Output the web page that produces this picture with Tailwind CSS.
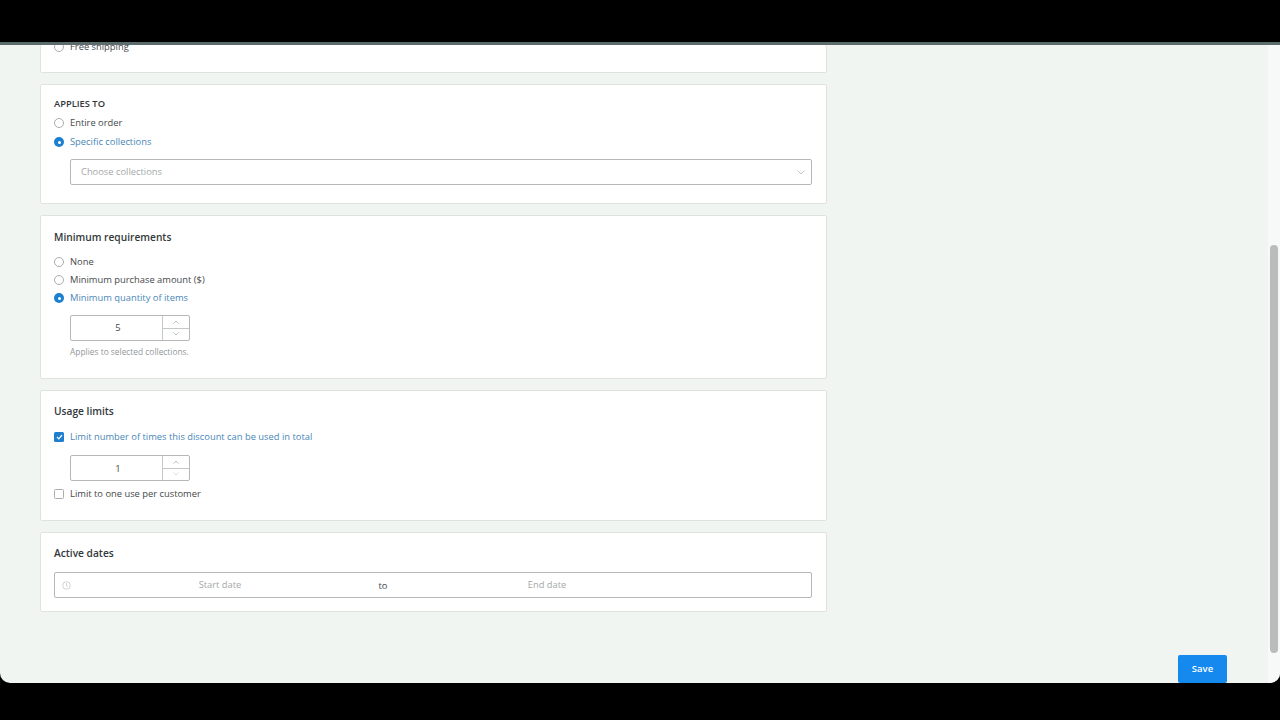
<!DOCTYPE html>
<html lang="en">
<head>
    <meta charset="UTF-8">
    <title>Discount</title>
    <script src="https://cdn.jsdelivr.net/npm/@tailwindcss/browser@4"></script>
</head>
<body class="bg-black font-['Open_Sans',sans-serif] text-[9.35px] leading-[14px] text-[#45494c]">
<div class="h-[720px] w-[1280px] overflow-hidden flex flex-col">
    <div class="h-[42px] bg-black shrink-0"></div>
    <div class="h-[3px] bg-[#5c6b6b] shrink-0"></div>

    <div class="h-[638px] flex rounded-b-[10px] overflow-hidden bg-[#f1f5f1] shrink-0">
        <!-- page -->
        <div class="flex-1 flex flex-col justify-between overflow-hidden pl-10">
            <div class="w-[787px] flex flex-col gap-[11px]">
                <!-- shipping, scrolled off -->
                <div class="bg-white border border-[#dfe3e0] rounded-[2px] border-t-0 h-[28px] px-[13px] overflow-hidden">
                    <div class="flex items-center gap-[6px] -mt-[5px]">
                        <span class="w-[10px] h-[10px] rounded-full border border-[#a9adad] bg-white shrink-0"></span>
                        <span>Free shipping</span>
                    </div>
                </div>

                <!-- applies to -->
                <div class="bg-white border border-[#dfe3e0] rounded-[2px] h-[120px] px-[13px] pt-[12px]">
                    <h3 class="text-[9.35px] font-semibold text-[#33373a] mb-[5px]">APPLIES TO</h3>
                    <div class="flex flex-col gap-[5px]">
                        <div class="flex items-center gap-[6px]">
                            <span class="w-[10px] h-[10px] rounded-full border border-[#a9adad] shrink-0"></span>
                            <span>Entire order</span>
                        </div>
                        <div class="flex items-center gap-[6px]">
                            <span class="w-[10px] h-[10px] rounded-full bg-[#1c7fd0] flex items-center justify-center shrink-0"><span class="w-[3px] h-[3px] rounded-full bg-white"></span></span>
                            <span class="text-[#4a87b8]">Specific collections</span>
                        </div>
                    </div>
                    <div class="ml-[16px] mr-[1px] mt-[10px] h-[26px] border border-[#b4b8b8] rounded-[2px] flex items-center justify-between pl-[10px] pr-[6px] text-[#a4a8a8]">
                        <span>Choose collections</span>
                        <svg width="8" height="5" viewBox="0 0 8 5" fill="none" stroke="#c4c8c8" stroke-width="1"><path d="M.5.5 4 4 7.5.5"/></svg>
                    </div>
                </div>

                <!-- minimum requirements -->
                <div class="bg-white border border-[#dfe3e0] rounded-[2px] h-[164px] px-[13px] pt-[14px]">
                    <h3 class="text-[10.2px] font-semibold text-[#33373a] mb-[11px]">Minimum requirements</h3>
                    <div class="flex flex-col gap-[4px]">
                        <div class="flex items-center gap-[6px]">
                            <span class="w-[10px] h-[10px] rounded-full border border-[#a9adad] shrink-0"></span>
                            <span>None</span>
                        </div>
                        <div class="flex items-center gap-[6px]">
                            <span class="w-[10px] h-[10px] rounded-full border border-[#a9adad] shrink-0"></span>
                            <span>Minimum purchase amount ($)</span>
                        </div>
                        <div class="flex items-center gap-[6px]">
                            <span class="w-[10px] h-[10px] rounded-full bg-[#1c7fd0] flex items-center justify-center shrink-0"><span class="w-[3px] h-[3px] rounded-full bg-white"></span></span>
                            <span class="text-[#4a87b8]">Minimum quantity of items</span>
                        </div>
                    </div>
                    <div class="ml-[16px] mt-[10px] w-[120px] h-[26px] border border-[#b4b8b8] rounded-[2px] flex">
                        <div class="flex-1 flex items-center justify-center pl-[3px]">5</div>
                        <div class="w-[27px] border-l border-[#c4c8c8] flex flex-col">
                            <div class="flex-1 flex items-center justify-center border-b border-[#c4c8c8]">
                                <svg width="6" height="4" viewBox="0 0 6 4" fill="none" stroke="#a9adad" stroke-width=".8"><path d="M.5 3.5 3 1l2.5 2.5"/></svg>
                            </div>
                            <div class="flex-1 flex items-center justify-center">
                                <svg width="6" height="4" viewBox="0 0 6 4" fill="none" stroke="#a9adad" stroke-width=".8"><path d="M.5.5 3 3 5.5.5"/></svg>
                            </div>
                        </div>
                    </div>
                    <p class="ml-[16px] mt-[4px] text-[8.4px] text-[#93979a]">Applies to selected collections.</p>
                </div>

                <!-- usage limits -->
                <div class="bg-white border border-[#dfe3e0] rounded-[2px] h-[131px] px-[13px] pt-[13px]">
                    <h3 class="text-[10.2px] font-semibold text-[#33373a] mb-[12px]">Usage limits</h3>
                    <div class="flex items-center gap-[6px]">
                        <span class="w-[10px] h-[10px] rounded-[1.5px] bg-[#1c7fd0] flex items-center justify-center shrink-0">
                            <svg width="7" height="6" viewBox="0 0 7 6" fill="none" stroke="#fff" stroke-width="1.2"><path d="M1 3l1.800 1.800L6 1"/></svg>
                        </span>
                        <span class="text-[#4a87b8]">Limit number of times this discount can be used in total</span>
                    </div>
                    <div class="ml-[16px] mt-[11px] w-[120px] h-[26px] border border-[#b4b8b8] rounded-[2px] flex">
                        <div class="flex-1 flex items-center justify-center pl-[3px] pt-[1px]">1</div>
                        <div class="w-[27px] border-l border-[#c4c8c8] flex flex-col">
                            <div class="flex-1 flex items-center justify-center border-b border-[#c4c8c8]">
                                <svg width="6" height="4" viewBox="0 0 6 4" fill="none" stroke="#a9adad" stroke-width=".8"><path d="M.5 3.5 3 1l2.5 2.5"/></svg>
                            </div>
                            <div class="flex-1 flex items-center justify-center">
                                <svg width="6" height="4" viewBox="0 0 6 4" fill="none" stroke="#d0d4d4" stroke-width=".8"><path d="M.5.5 3 3 5.5.5"/></svg>
                            </div>
                        </div>
                    </div>
                    <div class="flex items-center gap-[6px] mt-[6px]">
                        <span class="w-[10px] h-[10px] rounded-[1.5px] border border-[#a9adad] shrink-0"></span>
                        <span>Limit to one use per customer</span>
                    </div>
                </div>

                <!-- active dates -->
                <div class="bg-white border border-[#dfe3e0] rounded-[2px] h-[80px] px-[13px] pt-[13px]">
                    <h3 class="text-[10.2px] font-semibold text-[#33373a] mb-[12px]">Active dates</h3>
                    <div class="h-[26px] mr-[1px] border border-[#b4b8b8] rounded-[2px] flex items-center pl-[7px] text-[#a4a8a8]">
                        <svg width="9" height="9" viewBox="0 0 9 9" fill="none" stroke="#c4c8c8" stroke-width=".8" class="shrink-0"><circle cx="4.5" cy="4.5" r="3.8"/><path d="M4.5 2.200v2.500l1.600.8"/></svg>
                        <span class="w-[298px] text-center shrink-0">Start date</span>
                        <span class="w-[18px] ml-[5px] pt-[1px] text-center text-[#45494c] shrink-0">to</span>
                        <span class="w-[310px] text-center shrink-0">End date</span>
                    </div>
                </div>
            </div>

            <div class="flex justify-end pr-[41px]">
                <button class="w-[49px] h-[28px] bg-[#1589ee] rounded-[2px] text-white font-semibold text-[9.5px]">Save</button>
            </div>
        </div>

        <!-- scrollbar -->
        <div class="w-[12px] bg-[#f7f9f8] shrink-0 pt-[200px] pl-[2px] pr-[2px]">
            <div class="h-[408px] rounded-full bg-[#b9bcbb]"></div>
        </div>
    </div>

    <div class="flex-1 bg-black"></div>
</div>
</body>
</html>
